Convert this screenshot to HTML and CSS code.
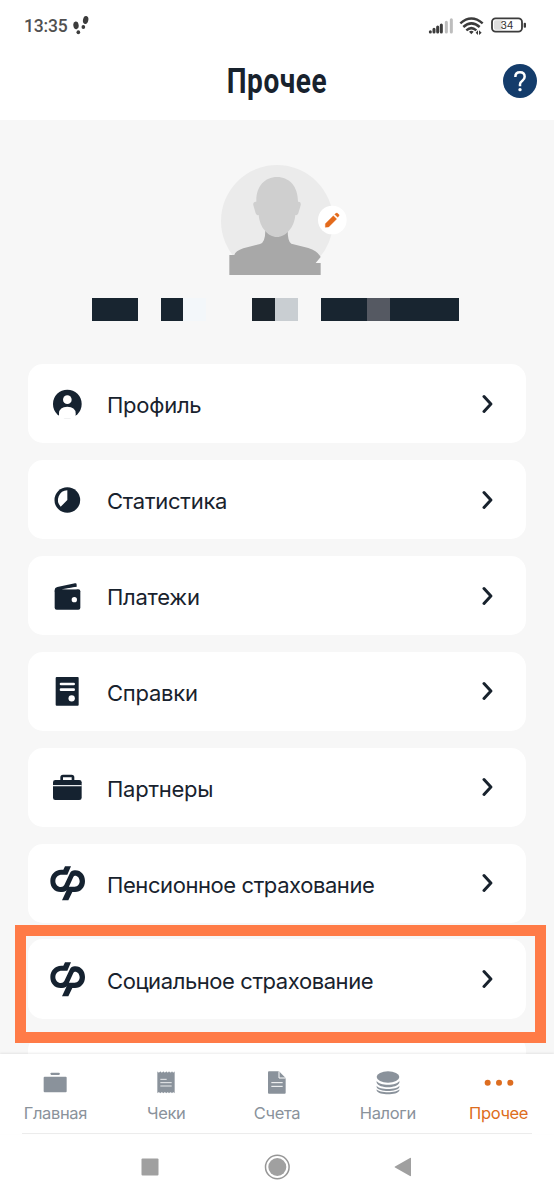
FILE: index.html
```html
<!DOCTYPE html>
<html lang="ru">
<head>
<meta charset="utf-8">
<title>Прочее</title>
<link rel="stylesheet" href="styles.css">
</head>
<body>
<svg class="defs" width="0" height="0">
  <symbol id="chevron" viewBox="0 0 12 20"><path d="M2 2.6 8.9 10 2 17.4" fill="none" stroke="currentColor" stroke-width="3" stroke-linecap="round" stroke-linejoin="round"/></symbol>
  <symbol id="fund" viewBox="0 0 108 108"><path d="M48 4H66L55 29H39C27 29 19 37 19 48C19 58 26 66 36 66Q43 66 46 60L62 26Q67 16 77 16H79C97 16 108 31 108 48C108 67 96 81 78 81H70L58 106H39L58 65H77C86 65 92 58 92 49C92 39 86 32 78 32Q75 32 73 36L58 69Q52 81 39 81H35C16 81 4 67 4 48C4 29 17 15 37 14H43Z" fill="currentColor"/></symbol>
</svg>
<div class="screen">
  <div class="status">
    <span class="time">13:35</span>
    <svg class="steps" viewBox="0 0 48 60"><g fill="#3c3c3c"><ellipse cx="9" cy="31" rx="8" ry="11.500" transform="rotate(-8 9 31)"/><ellipse cx="16" cy="52" rx="5.500" ry="6"/><ellipse cx="38" cy="15" rx="8" ry="12" transform="rotate(12 38 15)"/><ellipse cx="31" cy="36" rx="5.500" ry="6"/></g></svg>
    <svg class="signals" viewBox="0 0 300 60">
      <g stroke-width="9" stroke-linecap="round"><path d="M10 51v-1M21 51v-8M32 51v-15M43 51v-21" stroke="#3c3c3c"/><path d="M58 51v-29M73 51v-37" stroke="#bdbdbd"/></g>
      <g fill="none" stroke="#3c3c3c" stroke-width="7.500"><path d="M100 25Q133-4 167 25M109 36Q133 14 158 36M118 46Q133 33 148 46"/></g>
      <path d="M126 50q7-5 14 0l-7 8zM146 53l7-7v14zM156 46v14l8-7z" fill="#3c3c3c"/>
      <rect x="195" y="10" width="90" height="40" rx="11" fill="#fff" stroke="#3c3c3c" stroke-width="5.500"/><rect x="201" y="16" width="27" height="28" rx="5" fill="#dedede"/><rect x="290" y="23" width="7" height="15" rx="3" fill="#3c3c3c"/>
      <text x="240" y="42" class="battery">34</text>
    </svg>
  </div>
  <header class="header">
    <h1>Прочее</h1>
    <svg class="help" viewBox="0 0 102 102"><circle cx="51" cy="51" r="51" fill="#143c6b"/><path d="M37 39q0-14 14-14t14 13q0 7-7 12-7 5-7 11v6" fill="none" stroke="#fff" stroke-width="7.500"/><circle cx="51" cy="77" r="5" fill="#fff"/></svg>
  </header>
  <main class="content">
    <svg class="avatar" viewBox="0 0 510 420">
      <circle cx="231" cy="213" r="168" fill="#ebebeb"/>
      <path d="M88 375V315H103Q106 303 130 295L180 282Q196 278 196 240H263Q263 276 274 281L325 294Q352 302 362 321L347 339H362V375Z" fill="#a8a8a8"/>
      <path d="M231 81C268 81 294 109 294 155Q304 154 302 166L295 190Q293 197 286 195C283 232 258 261 231 261S179 232 176 195Q169 197 167 190L160 166Q158 154 169 155C168 109 194 81 231 81Z" fill="#cfcfcf"/>
      <rect x="88" y="375" width="275" height="8" fill="#f7f7f7"/>
      <circle cx="397" cy="210" r="43" fill="#fff"/>
      <path d="M376 221 400 197 410 207 386 231 376 232ZM404 193 408 190Q411 188 414 191L416 193Q419 196 416 199L413 202Z" fill="#e36a1b" stroke="#e36a1b" stroke-width="1"/>
    </svg>
    <div class="name"><i class="dark two"></i><i></i><i class="dark"></i><i class="pale"></i><i class="two"></i><i class="ink"></i><i class="silver"></i><i></i><i class="dark two"></i><i class="slate"></i><i class="dark three"></i></div>
    <nav class="list">
      <a class="card"><svg class="icon" viewBox="0 0 108 108"><circle cx="55" cy="54" r="43" fill="currentColor"/><circle cx="55" cy="41" r="13" fill="#fff"/><path d="M30 98V82Q31 62 55 62T80 82V98Z" fill="#fff"/></svg><span>Профиль</span><svg class="chevron"><use href="#chevron"/></svg></a>
      <a class="card"><svg class="icon" viewBox="0 0 108 108"><circle cx="55" cy="54" r="38.500" fill="currentColor"/><path d="M55 25V54L35 74A29 29 0 0 1 55 25Z" fill="#fff"/></svg><span>Статистика</span><svg class="chevron"><use href="#chevron"/></svg></a>
      <a class="card"><svg class="icon" viewBox="0 0 108 108"><rect x="17" y="34" width="77" height="61" rx="6" fill="currentColor"/><path d="M17 40V36Q17 29 25 27L78 16Q83 15 83 20V27L42 35Z" fill="currentColor"/><path d="M38 34 83 26V34Z" fill="#fff"/><circle cx="76" cy="65" r="8" fill="#fff"/></svg><span>Платежи</span><svg class="chevron"><use href="#chevron"/></svg></a>
      <a class="card"><svg class="icon" viewBox="0 0 108 108"><rect x="20" y="12" width="69" height="86" rx="3" fill="currentColor"/><path d="M36 33H74M36 50H74" stroke="#fff" stroke-width="8" stroke-linecap="round"/><circle cx="68" cy="76" r="9.500" fill="#fff"/></svg><span>Справки</span><svg class="chevron"><use href="#chevron"/></svg></a>
      <a class="card"><svg class="icon" viewBox="0 0 108 108"><rect x="12" y="33" width="86" height="60" rx="7" fill="currentColor"/><path d="M38 34V25Q38 21 42 21H68Q72 21 72 25V34" fill="none" stroke="currentColor" stroke-width="8"/><path d="M12 50H98" stroke="#fff" stroke-width="3.500"/></svg><span>Партнеры</span><svg class="chevron"><use href="#chevron"/></svg></a>
      <a class="card"><svg class="icon"><use href="#fund"/></svg><span class="long">Пенсионное страхование</span><svg class="chevron"><use href="#chevron"/></svg></a>
      <a class="card selected"><svg class="icon"><use href="#fund"/></svg><span class="long">Социальное страхование</span><svg class="chevron"><use href="#chevron"/></svg><b class="highlight"></b></a>
      <a class="card"></a>
    </nav>
  </main>
  <footer class="tabs">
    <a class="tab"><svg viewBox="0 0 78 78"><rect x="26" y="8" width="27" height="7" rx="2" fill="currentColor"/><rect x="5" y="20" width="69" height="47" rx="3" fill="currentColor"/></svg><span>Главная</span></a>
    <a class="tab"><svg viewBox="0 0 78 78"><path d="M13 4Q17 11 22 4 26 11 31 4 35 11 40 4 44 11 48 4 53 11 57 4 61 11 65 4V70Q61 63 57 70 53 63 48 70 44 63 40 70 35 63 31 70 26 63 22 70 17 63 13 70Z" fill="currentColor"/><path d="M22 28H41M22 38H56M22 48H56" stroke="#fff" stroke-width="2.500"/></svg><span>Чеки</span></a>
    <a class="tab"><svg viewBox="0 0 78 78"><path d="M15 4H45L65 24V68Q65 71 62 71H15Q12 71 12 68V7Q12 4 15 4Z" fill="currentColor"/><path d="M45 4V24H65M22 38H56M22 49H56" fill="none" stroke="#fff" stroke-width="3"/></svg><span>Счета</span></a>
    <a class="tab"><svg viewBox="0 0 78 78"><ellipse cx="39" cy="21" rx="34" ry="17" fill="currentColor"/><path d="M5 32V38C12 56 66 56 73 38V32C66 48 12 48 5 32ZM5 47V52C12 67 66 67 73 52V47C66 60 12 60 5 47ZM5 58V62C12 76 66 76 73 62V58C66 70 12 70 5 58Z" fill="currentColor"/></svg><span>Налоги</span></a>
    <a class="tab active"><svg class="dots" viewBox="0 0 96 78"><g fill="currentColor"><circle cx="14" cy="38" r="9"/><circle cx="48" cy="38" r="9"/><circle cx="82" cy="38" r="9"/></g></svg><span>Прочее</span></a>
  </footer>
  <div class="system">
    <svg viewBox="0 0 554 67"><g fill="#a0a0a0"><rect x="141.500" y="24.500" width="17" height="17" rx="1"/><circle cx="277.300" cy="33" r="9"/><path d="M411 24.500V41.500Q411 42.500 410 42L395 33.500Q394 33 395 32.500L410 24Q411 23.500 411 24.500Z"/></g><circle cx="277.300" cy="33" r="11.800" fill="none" stroke="#969696" stroke-width="1.500"/></svg>
  </div>
</div>
</body>
</html>
```
FILE: styles.css
```css
* { box-sizing: border-box; }
body { margin: 0; background: #fff; color: #18222d; font-family: Inter, "Noto Sans", sans-serif; }
.defs { display: block; }
.screen { display: flex; flex-direction: column; width: 554px; height: 1200px; overflow: hidden; }

.status { flex: none; display: flex; height: 50px; padding: 0 27px 0 24px; }
.time { width: 49px; padding-top: 16px; font: 500 17.500px/21px Roboto, sans-serif; letter-spacing: -.2px; color: #505050; white-space: nowrap; }
.steps { width: 16px; height: 20px; margin-top: 15px; }
.signals { width: 100px; height: 20px; margin: 15px 0 0 auto; }
.battery { font: 31px Inter, sans-serif; fill: #333; text-anchor: middle; }

.header { flex: none; display: grid; grid-template-columns: 60px 1fr 60px; align-items: center; height: 70px; }
h1 { grid-column: 2; margin: -6px 0 0; font: 700 35px/42px Roboto, sans-serif; letter-spacing: .7px; text-align: center; transform: scaleX(.8); }
.help { width: 34px; height: 34px; margin-left: 9px; margin-top: -9px; }

.content { flex: none; height: 933.5px; padding: 30px 28px 0; background: #f7f7f7; overflow: hidden; }
.avatar { display: block; width: 170px; height: 140px; margin-left: 172px; }
.name { display: flex; width: 367px; height: 23px; margin: 8px 0 43.300px 63.700px; }
.name i { flex: 1; }
.name .two { flex: 2; }
.name .three { flex: 3; }
.dark { background: #182530; }
.ink { background: #1b242c; }
.pale { background: #f3f7fa; }
.silver { background: #c9ced2; }
.slate { background: #555962; }

.list { display: flex; flex-direction: column; gap: 16.670px; }
.card { position: relative; flex: none; display: flex; align-items: center; height: 79.200px; padding: 0 32px 0 20.800px; border-radius: 15px; background: #fff; }
.selected { z-index: 1; }
.icon { width: 36px; height: 36px; color: #152230; }
.card span { margin: 3.200px 0 0 22.200px; font-size: 22px; line-height: 28px; letter-spacing: -.25px; white-space: nowrap; }
.card .long { margin-top: 4px; letter-spacing: -.42px; }
.chevron { width: 12px; height: 20px; margin-left: auto; }
.highlight { position: absolute; left: -13px; top: -14.300px; width: 531px; height: 117.500px; border: 11.300px solid #ff7b47; }

.tabs { flex: none; display: grid; grid-template-columns: repeat(5, 1fr); height: 80px; background: #fff; box-shadow: 0 -1px 2px rgba(0, 0, 0, .08); position: relative; z-index: 2; }
.tabs::after { content: ""; position: absolute; left: 22px; right: 22px; bottom: 0; height: 1px; background: #ececec; }
.tab { display: flex; flex-direction: column; align-items: center; padding-top: 16px; color: #8a929b; }
.tab svg { width: 26px; height: 26px; }
.tab .dots { width: 32px; }
.tab span { margin-top: 7.500px; font-size: 16.500px; line-height: 20px; letter-spacing: -.35px; }
.active { color: #dd6d20; }
.system svg { display: block; width: 554px; height: 67px; }
```
